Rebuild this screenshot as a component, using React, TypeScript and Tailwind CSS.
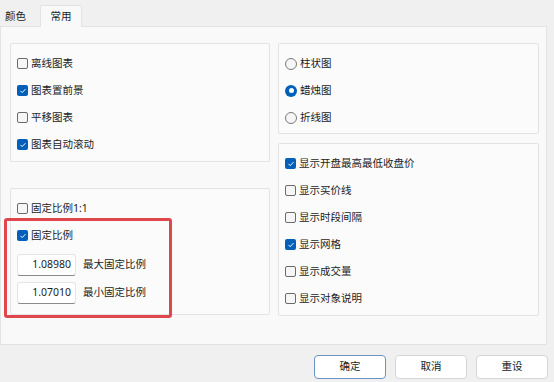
import React from 'react';

const FONT = '"Noto Sans", "Noto Sans CJK SC", sans-serif';

const CheckBox: React.FC<{ checked?: boolean; label: string }> = ({ checked, label }) => (
  <div className="flex h-[27px] items-center gap-[3px]">
    {checked ? (
      <span className="flex size-[11px] items-center justify-center rounded-[2px] bg-[#005fb8]">
        <svg className="size-[8px]" viewBox="0 0 10 10" fill="none" stroke="white" strokeWidth="1.2">
          <path d="M2.2 5.2l1.8 1.8 3.8-4" strokeLinecap="round" strokeLinejoin="round" />
        </svg>
      </span>
    ) : (
      <span className="size-[11px] rounded-[2px] border border-[#6b6b6b] bg-[#f6f6f6]" />
    )}
    <span className="text-[10.5px] text-[#1b1b1b]">{label}</span>
  </div>
);

const Radio: React.FC<{ checked?: boolean; label: string }> = ({ checked, label }) => (
  <div className="flex h-[27px] items-center gap-[3px]">
    {checked ? (
      <span className="flex size-[12px] items-center justify-center rounded-full bg-[#005fb8]">
        <span className="size-[5px] rounded-full bg-white" />
      </span>
    ) : (
      <span className="size-[12px] rounded-full border border-[#7a7a7a] bg-[#f6f6f6]" />
    )}
    <span className="text-[10.5px] text-[#1b1b1b]">{label}</span>
  </div>
);

const NumberBox: React.FC<{ value: string; label: string }> = ({ value, label }) => (
  <div className="flex items-center gap-[7px]">
    <div className="flex h-[22px] w-[59px] items-center justify-end rounded-[3px] border border-[#e5e5e5] border-b-[#8a8a8a] bg-white pr-[4px] text-[10.5px] text-[#1b1b1b]">
      {value}
    </div>
    <span className="text-[10.5px] text-[#1b1b1b]">{label}</span>
  </div>
);

const Group: React.FC<{ className?: string; children: React.ReactNode }> = ({ className, children }) => (
  <div className={`rounded-[2px] border border-[#e3e3e3] bg-[#fbfbfb] pl-[6px] pt-[6px] ${className ?? ''}`}>
    {children}
  </div>
);

const Button: React.FC<{ label: string; primary?: boolean }> = ({ label, primary }) => (
  <div
    className={`flex h-[24px] w-[72px] items-center justify-center rounded-[4px] border bg-white text-[10.5px] text-[#1b1b1b] ${
      primary ? 'border-[#6b93c6]' : 'border-[#d6d6d6]'
    }`}
  >
    {label}
  </div>
);

export default function App() {
  return (
    <div className="relative h-[382px] w-[554px] overflow-hidden bg-[#f0f0f0]" style={{ fontFamily: FONT }}>
      {/* Tabs */}
      <div className="flex h-[26px] items-end">
        <div className="flex h-[20px] w-[40px] items-center pl-[5px] pt-[2px] text-[10.5px] text-[#1b1b1b]">颜色</div>
        <div className="relative z-10 -mb-px flex h-[22px] w-[42px] items-start justify-center rounded-t-[2px] border border-b-0 border-[#e3e3e3] bg-[#f9f9f9] pt-[3px] text-[10.5px] text-[#1b1b1b]">
          常用
        </div>
      </div>

      {/* Panel */}
      <div className="flex h-[319px] w-[547px] gap-[8px] border border-[#e3e3e3] bg-[#f9f9f9] pl-[9px] pt-[16px]">
        <div className="flex w-[260px] flex-col gap-[26px]">
          <Group className="h-[119px]">
            <CheckBox label="离线图表" />
            <CheckBox checked label="图表置前景" />
            <CheckBox label="平移图表" />
            <CheckBox checked label="图表自动滚动" />
          </Group>
          <Group className="h-[127px]">
            <CheckBox label="固定比例1:1" />
            <CheckBox checked label="固定比例" />
            <div className="mt-[5px] flex flex-col gap-[6px]">
              <NumberBox value="1.08980" label="最大固定比例" />
              <NumberBox value="1.07010" label="最小固定比例" />
            </div>
          </Group>
        </div>
        <div className="flex w-[261px] flex-col gap-[9px]">
          <Group className="h-[91px]">
            <Radio label="柱状图" />
            <Radio checked label="蜡烛图" />
            <Radio label="折线图" />
          </Group>
          <Group className="h-[173px]">
            <CheckBox checked label="显示开盘最高最低收盘价" />
            <CheckBox label="显示买价线" />
            <CheckBox label="显示时段间隔" />
            <CheckBox checked label="显示网格" />
            <CheckBox label="显示成交量" />
            <CheckBox label="显示对象说明" />
          </Group>
        </div>
      </div>

      {/* Buttons */}
      <div className="mt-[10px] flex justify-end gap-[9px] pr-[6px]">
        <Button primary label="确定" />
        <Button label="取消" />
        <Button label="重设" />
      </div>

      {/* Red annotation box */}
      <div className="pointer-events-none absolute left-[4px] top-[218px] h-[100px] w-[168px] rounded-[3px] border-[3px] border-[#e0474c]" />
    </div>
  );
}
